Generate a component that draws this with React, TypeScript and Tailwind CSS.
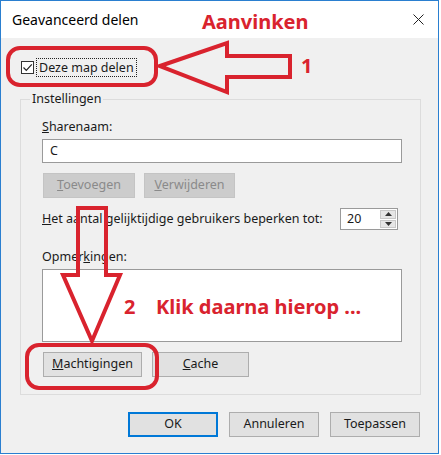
const RED = "#d9232e";

function Btn({
  children,
  className = "",
  disabled = false,
}: {
  children: React.ReactNode;
  className?: string;
  disabled?: boolean;
}) {
  return (
    <div
      className={
        "h-[25px] flex items-center justify-center border " +
        (disabled
          ? "bg-[#cccccc] border-[#c4c4c4] text-[#8a8a8a] "
          : "bg-[#e1e1e1] border-[#adadad] text-[#1a1a1a] ") +
        className
      }
    >
      {children}
    </div>
  );
}

export default function App() {
  return (
    <div
      className="relative w-[441px] h-[455px] bg-white text-[12.5px] text-[#1a1a1a] overflow-hidden"
      style={{ fontFamily: '"Noto Sans", "Open Sans", sans-serif' }}
    >
      {/* dialog window */}
      <div className="w-[439px] h-[454px] border border-[#2a7fd0] flex flex-col bg-[#f0f0f0]">
        {/* title bar */}
        <div className="h-[37px] bg-white flex items-center justify-between pl-[11px] pr-[14px] flex-shrink-0">
          <span className="text-[14px] text-black">Geavanceerd delen</span>
          <svg width="11" height="11" viewBox="0 0 11 11">
            <path d="M0.5 0.5 L10.5 10.5 M10.5 0.5 L0.5 10.5" stroke="#222" strokeWidth="1" />
          </svg>
        </div>

        {/* checkbox row */}
        <div className="mt-[19px] ml-[20px] h-[20px] flex items-center">
          <div className="w-[13px] h-[13px] border border-[#333] bg-white flex items-center justify-center">
            <svg width="11" height="11" viewBox="0 0 11 11">
              <path d="M1.5 5.5 L4.3 8.3 L9.8 2.3" stroke="#222" strokeWidth="1.2" fill="none" />
            </svg>
          </div>
          <span className="ml-[2px] px-[2px] h-[19px] leading-[17px] border border-dotted border-[#222]">
            Deze map delen
          </span>
        </div>

        {/* groupbox */}
        <div className="mt-[22px] ml-[19px] w-[401px] h-[296px] border border-[#dcdcdc] px-[21px] flex flex-col">
          <div className="-mt-[10px] -ml-[12px] w-fit bg-[#f0f0f0] px-[2px] h-[18px] leading-[18px]">
            Instellingen
          </div>
          <div className="mt-[10px] h-[18px] leading-[18px]">
            <u>S</u>harenaam:
          </div>
          <div className="mt-[3px] w-[360px] h-[24px] border border-[#9a9a9a] bg-white flex items-center pl-[7px]">
            C
          </div>
          <div className="mt-[10px] flex gap-[9px] ml-[1px]">
            <Btn disabled className="w-[92px]">
              <span>
                <u>T</u>oevoegen
              </span>
            </Btn>
            <Btn disabled className="w-[91px]">
              <span>
                <u>V</u>erwijderen
              </span>
            </Btn>
          </div>
          <div className="mt-[10px] h-[22px] flex items-center">
            <span>
              <u>H</u>et aantal gelijktijdige gebruikers beperken tot:
            </span>
            <div className="ml-auto mr-[1px] w-[58px] h-[22px] border border-[#9a9a9a] bg-white flex">
              <span className="flex-1 pl-[6px] leading-[20px]">20</span>
              <div className="w-[18px] flex flex-col p-[1px] gap-[1px]">
                <div className="flex-1 bg-[#e6e6e6] border border-[#c8c8c8] flex items-center justify-center">
                  <svg width="7" height="4" viewBox="0 0 7 4">
                    <path d="M0 4 L3.5 0 L7 4 Z" fill="#333" />
                  </svg>
                </div>
                <div className="flex-1 bg-[#e6e6e6] border border-[#c8c8c8] flex items-center justify-center">
                  <svg width="7" height="4" viewBox="0 0 7 4">
                    <path d="M0 0 L3.5 4 L7 0 Z" fill="#333" />
                  </svg>
                </div>
              </div>
            </div>
          </div>
          <div className="mt-[18px] h-[18px] leading-[18px]">
            Opmer<u>k</u>ingen:
          </div>
          <div className="mt-[3px] w-[360px] h-[73px] border border-[#9a9a9a] bg-white" />
          <div className="mt-[10px] flex gap-[10px] ml-[1px]">
            <Btn className="w-[99px]">
              <span>
                <u>M</u>achtigingen
              </span>
            </Btn>
            <Btn className="w-[97px]">
              <span>
                <u>C</u>ache
              </span>
            </Btn>
          </div>
        </div>

        {/* footer buttons */}
        <div className="mt-[17px] flex justify-end gap-[11px] pr-[18px]">
          <Btn className="w-[90px] !border-2 !border-[#0078d7]">OK</Btn>
          <Btn className="w-[90px]">Annuleren</Btn>
          <Btn className="w-[90px]">Toepassen</Btn>
        </div>
      </div>

      {/* annotations */}
      <span
        className="absolute left-[202px] top-[8px] text-[20px] font-bold leading-[28px]"
        style={{ color: RED }}
      >
        Aanvinken
      </span>
      <div className="absolute left-[6px] top-[46px] w-[152px] h-[41px] border-4 border-[#d9232e] rounded-[14px]" />
      <svg className="absolute left-0 top-0" width="441" height="455" viewBox="0 0 441 455" fill="none">
        <polygon
          points="160,66 227,43 227,56 290,56 290,77 227,77 227,92"
          stroke={RED}
          strokeWidth="4"
          strokeLinejoin="miter"
        />
        <polygon
          points="78,208 106,208 106,275 120,275 92,341 63,275 78,275"
          stroke={RED}
          strokeWidth="4"
          strokeLinejoin="miter"
        />
      </svg>
      <span
        className="absolute left-[301px] top-[52px] text-[20px] font-bold leading-[28px]"
        style={{ color: RED }}
      >
        1
      </span>
      <span
        className="absolute left-[124px] top-[293px] text-[20px] font-bold leading-[28px]"
        style={{ color: RED }}
      >
        2
      </span>
      <span
        className="absolute left-[156px] top-[293px] text-[20px] font-bold leading-[28px]"
        style={{ color: RED }}
      >
        Klik daarna hierop ...
      </span>
      <div className="absolute left-[25px] top-[343px] w-[134px] h-[47px] border-4 border-[#d9232e] rounded-[14px]" />
    </div>
  );
}
